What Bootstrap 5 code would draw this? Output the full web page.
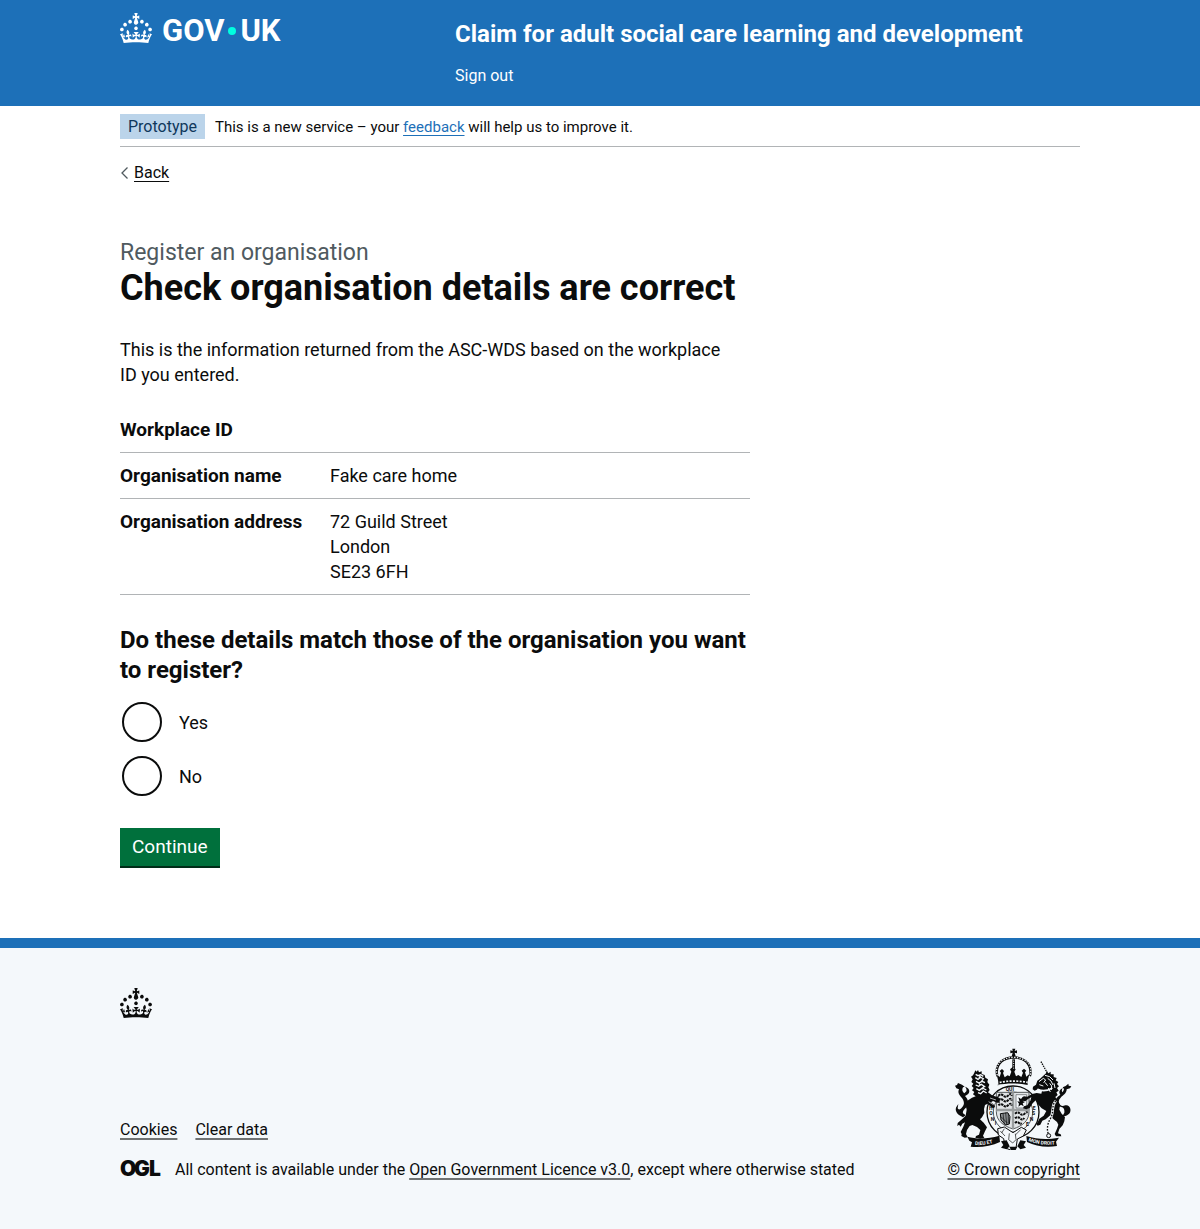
<!DOCTYPE html>
<html lang="en">
<head>
<meta charset="utf-8">
<meta name="viewport" content="width=device-width, initial-scale=1">
<title>Check organisation details are correct</title>
<link href="https://cdn.jsdelivr.net/npm/bootstrap@5.3.0/dist/css/bootstrap.min.css" rel="stylesheet">
<style>
  :root { --ink: #0b0c0c; --brand: #1d70b8; --rule: #b1b4b6; }
  body { font-family: Roboto, "Liberation Sans", sans-serif; font-size: 18px; line-height: 25px; color: var(--ink); background: #f4f8fb; }
  .page-width { max-width: 1020px; padding-left: 30px; padding-right: 30px; margin: 0 auto; }
  .text-s { font-size: 16px; line-height: 20px; }
  .site-head { background: var(--brand); color: #fff; }
  .site-head a { color: #fff; text-decoration: none; }
  .head-grid { padding: 13px 0 20px; }
  .head-logo { flex: 0 0 335px; }
  .head-name { font-size: 24px; line-height: 30px; font-weight: 700; }
  .head-service { padding-top: 6px; }
  .head-nav { padding-top: 17px; }
  .logo-word { font-size: 31px; line-height: 36px; font-weight: 700; }
  .logo-dot { width: 8px; height: 8px; border-radius: 50%; background: #00ffe0; margin: 0 4px; }
  .phase { padding: 8px 0 7px; border-bottom: 1px solid var(--rule); }
  .phase-tag { background: #bbd4ea; color: #0f385c; padding: 0 8px; line-height: 25px; margin-right: 10px; }
  .phase-text { font-size: 15px; }
  .phase a { color: var(--brand); text-underline-offset: 3px; }
  .back-link { margin-top: 16px; color: var(--ink); text-decoration: none; }
  .back-link span { text-decoration: underline; text-underline-offset: 3px; }
  main { padding: 52px 0 70px; }
  .main-col { padding-right: 10px; }
  .caption-l { font-size: 23px; line-height: 30px; color: #505a5f; display: block; }
  h1 { font-size: 36px; line-height: 40px; font-weight: 700; margin-bottom: 29px; }
  .intro { margin-bottom: 20px; padding-right: 12px; }
  .summary { margin-bottom: 30px; }
  .summary-row { padding: 10px 0; border-bottom: 1px solid var(--rule); }
  .summary dt { font-size: 19px; }
  legend { font-size: 24px; line-height: 30px; font-weight: 700; margin-bottom: 15px; }
  .choice { min-height: 44px; margin-bottom: 10px; padding-left: 2px; }
  .choice input { appearance: none; width: 40px; height: 40px; margin: 0; border: 2px solid var(--ink); border-radius: 50%; background: #fff; }
  .choice input:checked { box-shadow: inset 0 0 0 8px #fff; background: var(--ink); }
  .choice label { padding: 0 17px; }
  .btn-go { --bs-btn-color: #fff; --bs-btn-bg: #00703c; --bs-btn-hover-bg: #005a30; --bs-btn-hover-color: #fff; --bs-btn-border-width: 0; --bs-btn-border-radius: 0; --bs-btn-padding-x: 12px; --bs-btn-padding-y: 6px; --bs-btn-font-size: 19px; --bs-btn-line-height: 26px; box-shadow: 0 2px 0 #002d18; margin: 20px 0 2px; }
  .site-foot { border-top: 10px solid var(--brand); padding: 40px 0 49px; }
  .site-foot a { color: var(--ink); text-decoration-color: #6f7273; text-decoration-thickness: 2px; text-underline-offset: 3px; }
  .foot-meta { margin-top: 30px; }
  .foot-links { column-gap: 18px; margin-bottom: 20px; }
  .foot-ogl { margin: -5px 13px -1px 0; }
  .ogl-word { font: 900 21px Inter, Roboto, sans-serif; fill: var(--ink); }
  .arms { margin-bottom: 10px; }
  .motto { font: 700 15px Roboto, "Liberation Sans", sans-serif; }
</style>
<script src="https://cdn.jsdelivr.net/npm/bootstrap@5.3.0/dist/js/bootstrap.bundle.min.js"></script>
</head>
<body>
<svg width="0" height="0" class="d-none" aria-hidden="true">
  <symbol id="crown" viewBox="0 0 32 30"><path d="M22.6 10.4c-1 .4-2-.1-2.4-1-.4-.9.1-2 1-2.4.9-.4 2 .1 2.4 1s-.1 2-1 2.4m-5.9 6.7c-.9.4-2-.1-2.4-1-.4-.9.1-2 1-2.4.9-.4 2 .1 2.4 1s-.1 2-1 2.4m10.8-3.7c-1 .4-2-.1-2.4-1-.4-.9.1-2 1-2.4.9-.4 2 .1 2.4 1s0 2-1 2.4m3.3 4.8c-1 .4-2-.1-2.4-1-.4-.9.1-2 1-2.4.9-.4 2 .1 2.4 1s-.1 2-1 2.4M17 4.7l2.3 1.2V2.5l-2.3.7-.2-.2.9-3h-3.4l.9 3-.2.2c-.1.1-2.3-.7-2.3-.7v3.4L15 4.7c.1.1.1.2.2.2l-1.3 4c-.1.2-.1.4-.1.6 0 1.1.8 2 1.9 2.2h.7c1-.2 1.9-1.1 1.9-2.1 0-.2 0-.4-.1-.6l-1.3-4c-.1-.2 0-.2.1-.3m-7.6 5.7c.9.4 2-.1 2.4-1 .4-.9-.1-2-1-2.4-.9-.4-2 .1-2.4 1s0 2 1 2.4m-5 3c.9.4 2-.1 2.4-1 .4-.9-.1-2-1-2.4-.9-.4-2 .1-2.4 1s.1 2 1 2.4m-3.2 4.8c.9.4 2-.1 2.4-1 .4-.9-.1-2-1-2.4-.9-.4-2 .1-2.4 1s0 2 1 2.4m14.8 11c4.4 0 8.6.3 12.3.8 1.1-4.5 2.4-7 3.7-8.8l-2.5-.9c.2 1.3.3 1.9 0 2.7-.4-.4-.8-1.1-1.1-2.3l-1.2 4c.7-.5 1.3-.8 2-.9-1.1 2.5-2.6 3.1-3.5 3-1.1-.2-1.7-1.2-1.5-2.1.3-1.2 1.5-1.5 2.1-.1 1.1-2.3-.8-3-2-2.3 1.9-1.9 2.1-3.5.6-5.6-2.1 1.6-2.1 3.2-1.2 5.5-1.2-1.4-3.2-.6-2.5 1.6.9-1.4 2.1-.5 1.9.8-.2 1.1-1.7 2.1-3.5 1.9-2.7-.2-2.9-2.1-2.9-3.6.7-.1 1.9.5 2.9 1.9l.4-4.3c-1.1 1.1-2.1 1.4-3.2 1.4.4-1.2 2.1-3 2.1-3h-5.4s1.7 1.9 2.1 3c-1.1 0-2.1-.2-3.2-1.4l.4 4.3c1-1.4 2.2-2 2.9-1.9-.1 1.5-.2 3.4-2.9 3.6-1.9.2-3.4-.8-3.5-1.9-.2-1.3 1-2.2 1.9-.8.7-2.3-1.2-3-2.5-1.6.9-2.2.9-3.9-1.2-5.5-1.5 2-1.3 3.7.6 5.6-1.2-.7-3.1 0-2 2.3.6-1.4 1.8-1.1 2.1.1.2.9-.3 1.9-1.5 2.1-.9.2-2.4-.5-3.5-3 .6 0 1.2.3 2 .9l-1.2-4c-.3 1.1-.7 1.9-1.1 2.3-.3-.8-.2-1.4 0-2.7l-2.9.9C1.3 23 2.6 25.5 3.7 30c3.7-.5 7.9-.8 12.3-.8"/></symbol>
</svg>

<header class="site-head">
  <div class="page-width">
    <div class="head-grid d-flex flex-wrap flex-md-nowrap">
      <div class="head-logo">
        <a href="#" class="d-inline-flex align-items-start">
          <svg class="d-block me-2" width="34" height="30" viewBox="0 0 34 30" fill="#fff" aria-hidden="true"><use href="#crown" width="32" height="30"/></svg>
          <span class="logo-word d-flex align-items-center"><span>GOV</span><span class="logo-dot"></span><span>UK</span></span>
        </a>
      </div>
      <div class="head-service">
        <a href="#" class="head-name d-block">Claim for adult social care learning and development</a>
        <nav class="head-nav" aria-label="Menu"><a href="#" class="text-s d-block">Sign out</a></nav>
      </div>
    </div>
  </div>
</header>

<div class="bg-white">
  <div class="page-width">
    <div class="phase text-s d-flex align-items-center">
      <strong class="phase-tag fw-normal">Prototype</strong>
      <span class="phase-text">This is a new service – your <a href="#">feedback</a> will help us to improve it.</span>
    </div>
    <a href="#" class="back-link text-s d-inline-flex align-items-center">
      <svg width="14" height="14" viewBox="0 0 14 14" aria-hidden="true"><path d="M7.500 1.500 2 7l5.500 5.500" fill="none" stroke="#505a5f" stroke-width="1.300"/></svg>
      <span>Back</span>
    </a>
    <main>
      <div class="row gx-0">
        <div class="main-col col-md-8">
          <span class="caption-l">Register an organisation</span>
          <h1>Check organisation details are correct</h1>
          <p class="intro">This is the information returned from the ASC-WDS based on the workplace ID you entered.</p>
          <dl class="summary">
            <div class="summary-row row gx-0"><dt class="col-4">Workplace ID</dt><dd class="col-8 mb-0"></dd></div>
            <div class="summary-row row gx-0"><dt class="col-4">Organisation name</dt><dd class="col-8 mb-0">Fake care home</dd></div>
            <div class="summary-row row gx-0"><dt class="col-4">Organisation address</dt><dd class="col-8 mb-0">72 Guild Street<br>London<br>SE23 6FH</dd></div>
          </dl>
          <form>
            <fieldset>
              <legend>Do these details match those of the organisation you want to register?</legend>
              <div class="choice d-flex align-items-center"><input type="radio" name="match" id="match-yes"><label for="match-yes">Yes</label></div>
              <div class="choice d-flex align-items-center"><input type="radio" name="match" id="match-no"><label for="match-no">No</label></div>
            </fieldset>
            <button type="button" class="btn btn-go d-block">Continue</button>
          </form>
        </div>
      </div>
    </main>
  </div>
</div>

<footer class="site-foot">
  <div class="page-width">
    <svg class="d-block" width="32" height="30" fill="#0b0c0c" aria-hidden="true"><use href="#crown" width="32" height="30"/></svg>
    <div class="foot-meta d-flex flex-wrap flex-md-nowrap justify-content-between align-items-end">
      <div class="text-s">
        <div class="foot-links d-flex"><a href="#">Cookies</a><a href="#">Clear data</a></div>
        <div class="d-flex align-items-center">
          <svg class="foot-ogl flex-shrink-0" width="42" height="26" viewBox="0 0 42 26" role="img" aria-label="OGL"><text class="ogl-word" x="0 14 29" y="21">OGL</text></svg>
          <span>All content is available under the <a href="#">Open Government Licence v3.0</a>, except where otherwise stated</span>
        </div>
      </div>
      <div class="text-s text-center">
        <svg class="arms d-block mx-auto" width="117" height="102" viewBox="36 22 351 306" aria-hidden="true">
          <!-- royal crown -->
          <g fill="#0b0c0c" stroke="none">
            <path d="M208 24h9l-2 7 7-2v9l-7-2 3 11h-12l3-11-7 2v-9l7 2z"/>
            <path d="M160 108c-10-36 14-60 52-62 38 2 62 26 52 62l-6-4c6-30-14-50-46-50s-52 20-46 50z"/>
            <path d="M208 56h8v32h-8z"/>
            <path d="M166 134c1-12-2-22-6-34l10 9 4-13-4-5 7-6 6 6-3 6 5 13 9-6 6 3 5-14-4-7 9-8 8 8-4 7 5 14 7-4 9 6 5-13-4-6 7-6 7 6-4 5 4 13 10-9c-4 12-7 22-6 34-29-6-62-6-92 0z"/>
          </g>
          <path d="M163 104c-10-32 12-53 49-54 37 1 59 22 49 54" fill="none" stroke="#f4f8fb" stroke-width="4" stroke-dasharray="4 4"/>
          <path d="M212 60v26" stroke="#f4f8fb" stroke-width="3" stroke-dasharray="3 4"/>
          <path d="M170 125c27-5 57-5 84 0" fill="none" stroke="#f4f8fb" stroke-width="5" stroke-dasharray="6 4"/>
          <!-- garter and its motto -->
          <ellipse cx="210" cy="214" rx="78" ry="78" fill="#f4f8fb" stroke="#0b0c0c" stroke-width="4"/>
          <ellipse cx="210" cy="214" rx="59" ry="60" fill="none" stroke="#0b0c0c" stroke-width="2"/>
          <path id="garter-left" d="M170 263C150 244 146 215 150 190" fill="none"/>
          <path id="garter-right" d="M236 270C262 258 276 235 276 200" fill="none"/>
          <g class="motto" fill="#0b0c0c">
            <text x="188" y="152">QUI</text>
            <text x="138" y="208">H</text><text x="139" y="224">O</text><text x="143" y="240">N</text><text x="155" y="254">I</text>
            <text x="269" y="208">E</text><text x="267" y="224">S</text><text x="260" y="240">N</text><text x="249" y="256">E</text>
          </g>
          <!-- quartered shield -->
          <path d="M160 155h98v58c0 28-20 43-48 52-28-9-50-24-50-52z" fill="#e2e5e7" stroke="#55595b" stroke-width="3"/>
          <path d="M210 155v109M160 208h98" stroke="#9a9e9f" stroke-width="7"/>
          <path d="M166 165q8-7 15 0t15-1 10 2M166 179q8-7 15 0t15-1 10 2M166 194q8-7 15 0t15-1 10 2M216 219q8-7 15 0t15-1 6 2M216 233q8-7 15 0t13-1M216 247q6-6 12 0t6-1" fill="none" stroke="#0b0c0c" stroke-width="6" stroke-dasharray="7 2"/>
          <path d="M219 162h32v40h-32z" fill="#f4f8fb" stroke="#55595b" stroke-width="2"/>
          <path d="M226 170l8 5 7-8 3 7-5 7 7 3-7 4 3 9-8-5-8 6 2-9-5-7 7 1z" fill="#0b0c0c"/>
          <path d="M172 219l22-3 7 12-2 22-11 3-14-15z" fill="#8c9092" stroke="#0b0c0c" stroke-width="3"/>
          <path d="M180 218l4 34M188 216l3 36M196 218v30M174 228l20 20" stroke="#0b0c0c" stroke-width="2"/>
          <!-- lion -->
          <g fill="#0b0c0c">
            <path d="M94 96l3-7 4 4 4-5 3 7 8-3 0 8 9 3 2 8 8 5-2 8 6 8-3 8 4 8-5 7 12 9 13 4 9-2-3 6 9 2-6 5 2 7-9 0-12-5-6 4 7 5 5 8-5 5-7-4-10-10-8 4-3 12 1 12-7 13-6 6 11 10 10 14-6 12-6 13 4 7-12 2-15-3 2-5 9-4 4-14-10-9-14-6-8 3-8 12-3 12 5 10-9 1-10-5 1-6-3-6 8-16 5-13-8 4-5 9-5-6-5 4 1-9 13-11 11-11 3-18-3-13 5-14 14-9 11-4-8-6 4-7-7-5 5-7-6-6 5-7-6-5 4-8-5-8 6-4z"/>
            <path d="M72 198c-8 8-14 12-12 20l8 6-8 6-12-7c-10-8-13-20-6-27l4-6-2 12c3 8 9 3 14-3 9-10 4-22-4-30-7-8-10-14-6-23l-8-3-4-8 6-2 3-6 12 5 8 6-5 2c-4 8-2 13 4 18l6-6c2-6-1-10-4-14 10 2 15 10 12 18-3 6-8 7-12 10 10 10 12 20 4 32z"/>
          </g>
          <path d="M98 101l7 4 8-3 8 5M97 111l8 5 8-6 10 5M99 122l9 5 9-5 9 4M98 133l9 4 8-6 12 8M100 144l9 5 9-7 12 6M105 156l8 3 8-8 10 6M112 105l-4 8M120 116l-5 7M108 128l5 6M122 138l-5 8" fill="none" stroke="#f4f8fb" stroke-width="4"/>
          <path d="M141 172l18 6M137 183l14 9" fill="none" stroke="#f4f8fb" stroke-width="2"/>
          <!-- unicorn -->
          <g fill="#0b0c0c">
            <path d="M309 98l2-8 5 8 7-5 0 8 9 0 0 8 9 3-3 7 8 5-4 6 6 7-6 5 5 8-7 5 4 8-7 6 6 10 8 13-2 15 7 12 10 10-2 13-5 12-10 11-4 13 8 3 2 6-16 0-4-7 7-16 4-12-4-8-12-10-8-10-14 12-10 4-6 12-8 3-5-6 5-4 5-11 13-9 8-14-14-8-12-13-5-12-10 10-9 14-10 4-10-3 3-6 10-3 9-14 3-10-10 5-8 7-8-2-2-7 6-6 10 1 14-8 14-3 14 2 2-8-10-7-12 6-6-4 1-8 9-6 4-12 10-7z"/>
            <path d="M350 198c10 0 16 6 14 18l-6 11 9-1c12-4 17-12 15-22-2-8-8-12-15-10-7 2-10 3-15-1-7-7-6-15 1-22 8-8 18-13 18-25l10-3 4-6-8-2-1-6-8 7-9 4 4 5c-1 4-2 7-5 10-2-5-2-8 1-13-9 5-13 12-7 20-10 7-17 15-15 26 2 9 6 10 13 10z"/>
          </g>
          <path d="M294 63l18 32" stroke="#0b0c0c" stroke-width="4" stroke-dasharray="4 3"/>
          <path d="M288 123l13-10 7 5-6 8M306 104l14 4 10 10M314 113l10 8 6 12M320 128l6 8-1 12M306 125l8 10M289 132l12 4M316 142l6 12M333 128l3 14" fill="none" stroke="#f4f8fb" stroke-width="3"/>
          <path d="M283 146c14 6 32 4 45-4" fill="none" stroke="#f4f8fb" stroke-width="5"/>
          <path d="M339 180c-16 15-4 34-18 56-8 15-10 30-5 44" fill="none" stroke="#f4f8fb" stroke-width="8"/>
          <path d="M339 180c-16 15-4 34-18 56-8 15-10 30-5 44" fill="none" stroke="#0b0c0c" stroke-width="4" stroke-dasharray="5 4"/>
          <circle cx="317" cy="285" r="6" fill="none" stroke="#0b0c0c" stroke-width="3"/>
          <!-- buckle and scroll -->
          <path d="M164 264l20-5 26 17 25-16 15 8-9 18-18 9-4 27-16 6-16-6-5-28-16-11z" fill="#f4f8fb" stroke="#0b0c0c" stroke-width="3"/>
          <path d="M172 271l14 15M184 264l-8 13M199 278l-2 19 12 10 10-10-2-18M233 267l-15 15" fill="none" stroke="#0b0c0c" stroke-width="2"/>
          <g fill="#0b0c0c">
            <path d="M73 288c30 8 62 7 96-3l2 19c-27 12-60 18-88 14l4-13-8-5z"/>
            <path d="M250 286c32 10 61 12 98 5l-9 12 3 13c-32 5-64 1-90-12z"/>
            <path d="M174 302l17-3 9 18-9 9-17-5 7-8zM249 302l-17-3-9 18 9 9 17-5-7-8zM199 318h24l-5 10h-14z"/>
          </g>
          <path id="scroll-left" d="M92 313C118 315 145 310 171 300" fill="none"/>
          <path id="scroll-right" d="M254 300C280 311 310 315 342 311" fill="none"/>
          <g class="motto" fill="#f4f8fb">
            <text><textPath href="#scroll-left" startOffset="4">DIEU ET</textPath></text>
            <text><textPath href="#scroll-right" startOffset="2">MON DROIT</textPath></text>
          </g>
        </svg>
        <a href="#" class="d-block text-nowrap">© Crown copyright</a>
      </div>
    </div>
  </div>
</footer>
</body>
</html>
